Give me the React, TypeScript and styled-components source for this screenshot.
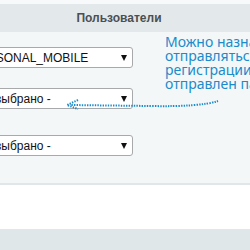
import React from "react";
import styled, { createGlobalStyle } from "styled-components";

const Global = createGlobalStyle`
  html, body { margin: 0; padding: 0; background: #ffffff; }
  body { font-family: "Liberation Sans", Arial, sans-serif; }
`;

const Page = styled.div`
  width: 250px;
  height: 250px;
  overflow: hidden;
  display: flex;
  flex-direction: column;
  background: #ffffff;
`;

const TopGap = styled.div`
  height: 4px;
  background: #f7f9fa;
`;

const Header = styled.div`
  height: 28px;
  background: #e3e8ea;
  display: flex;
  align-items: center;
  justify-content: center;
  padding-right: 12px;
  font-family: "Liberation Sans", Arial, sans-serif;
  font-weight: bold;
  font-size: 12px;
  color: #4a4f52;
`;

const Body = styled.div`
  position: relative;
  height: 151px;
  background: #f4f7f8;
  border-bottom: 2px solid #e1e7e9;
  display: flex;
  overflow: hidden;
`;

const Fields = styled.div`
  display: flex;
  flex-direction: column;
  margin-left: -33px;
  padding-top: 15px;
`;

const Select = styled.div<{ $gap: number }>`
  box-sizing: border-box;
  width: 166px;
  height: 21px;
  margin-top: ${(p) => p.$gap}px;
  background: #ffffff;
  border: 1px solid #a7a9aa;
  border-radius: 3px;
  display: flex;
  align-items: center;
  justify-content: space-between;
  padding: 0 5px 0 3px;
  font-family: "Liberation Sans", Arial, sans-serif;
  font-size: 12px;
  color: #111;
  white-space: nowrap;
`;

const Caret = styled.span`
  width: 0;
  height: 0;
  border-left: 3px solid transparent;
  border-right: 3px solid transparent;
  border-top: 6px solid #111;
`;

const Note = styled.div`
  margin-left: 32px;
  padding-top: 3px;
  font-family: "Noto Sans", sans-serif;
  font-size: 14px;
  line-height: 14px;
  color: #1a8bcb;
  white-space: nowrap;
`;

const Arrow = styled.svg`
  position: absolute;
  left: 0;
  top: 0;
  pointer-events: none;
`;

const WhiteArea = styled.div`
  height: 44px;
  background: #ffffff;
`;

const Footer = styled.div`
  flex: 1;
  background: #e0e7e9;
`;

export default function App() {
  return (
    <Page>
      <Global />
      <TopGap />
      <Header>Пользователи</Header>
      <Body>
        <Fields>
          <Select $gap={0}>
            <span>PERSONAL_MOBILE</span>
            <Caret />
          </Select>
          <Select $gap={20}>
            <span>- не выбрано -</span>
            <Caret />
          </Select>
          <Select $gap={26}>
            <span>- не выбрано -</span>
            <Caret />
          </Select>
        </Fields>
        <Note>
          Можно назначить, на какой
          <br />
          отправляться SMS
          <br />
          регистрации пользователя
          <br />
          отправлен пароль
        </Note>
        <Arrow width="250" height="151" viewBox="0 0 250 151">
          <path
            d="M218 69 Q200 75 150 74 L70 73"
            fill="none"
            stroke="#1a8bcb"
            strokeWidth="2"
            strokeDasharray="1.4 1.2"
          />
          <path
            d="M78 68 L67 73 L78 77"
            fill="none"
            stroke="#1a8bcb"
            strokeWidth="2"
            strokeDasharray="1.4 1.2"
          />
        </Arrow>
      </Body>
      <WhiteArea />
      <Footer />
    </Page>
  );
}
